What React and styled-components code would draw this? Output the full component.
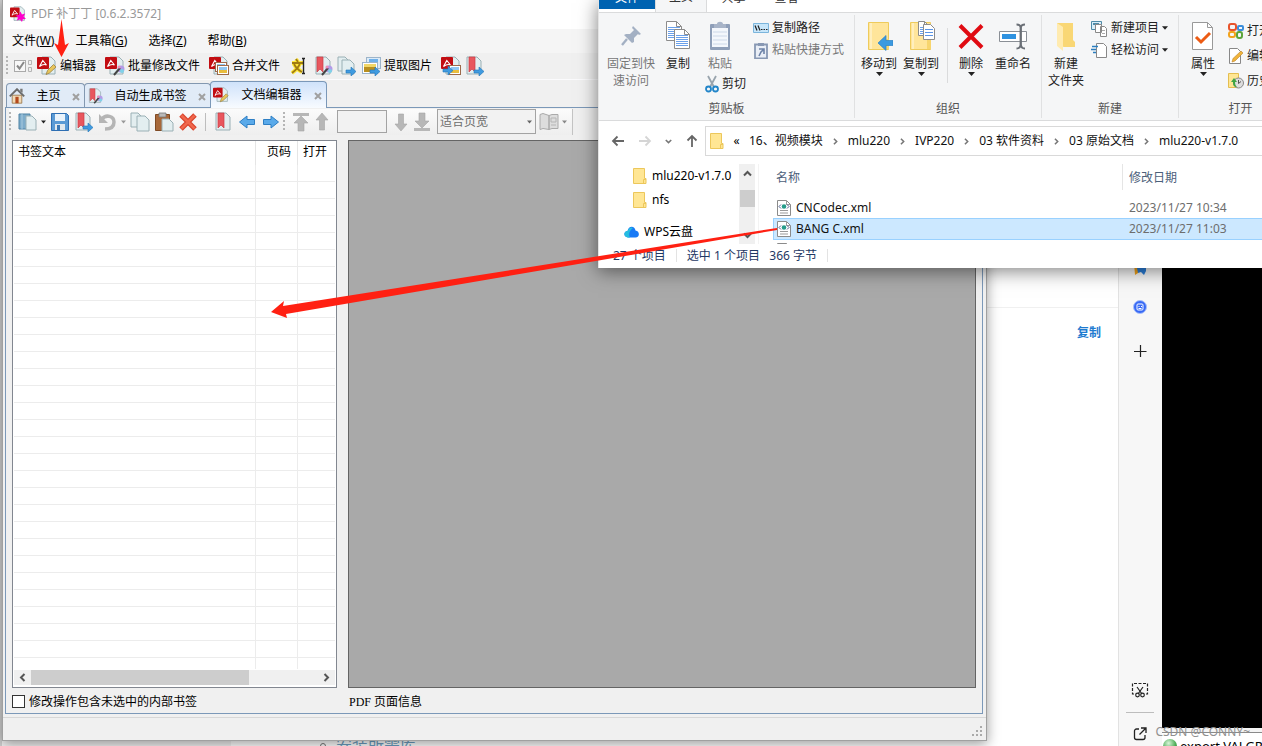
import React from "react";
import styled, { createGlobalStyle, css } from "styled-components";

const Global = createGlobalStyle`
  * { box-sizing: border-box; }
  body { margin: 0; overflow: hidden; font: 12px/16px "Noto Sans", "Noto Sans CJK SC", sans-serif; color: #000; }
  button, input, select { font: inherit; color: inherit; }
  svg { display: block; flex: none; }
`;

/* ---------- desktop behind the windows ---------- */
const Desktop = styled.div`
  position: relative; height: 100vh; min-height: 560px; overflow: hidden; display: flex; background: #fff;
`;
const DocNav = styled.div`width: 231px; background: #f2f2f2; border-left: 2px solid #cfcfcf;`;
const DocPage = styled.main`flex: 1; display: flex; flex-direction: column; min-width: 0; overflow: hidden;`;
const DocTop = styled.div`height: 308px; flex: none; border-bottom: 1px solid #f0f0f0;`;
const DocTools = styled.div`display: flex; justify-content: flex-end; padding: 17px;`;
const CopyLink = styled.a`color: #1e7bd0; text-decoration: none; font-weight: 700;`;
const DocFoot = styled.div`margin-top: auto; height: 10px; padding-left: 89px; display: flex; gap: 10px; align-items: flex-start;`;
const DocLink = styled.a`color: #6d9fc2; font-size: 16px; line-height: 18px; text-decoration: none;`;
const Bullet = styled.span`width: 6px; height: 6px; margin-top: 7px; border: 1px solid #777; border-radius: 50%;`;
const Rail = styled.aside`
  width: 44px; flex: none; display: flex; flex-direction: column; align-items: center;
  background: #f7f7f7; border-left: 1px solid #e2e2e2; padding: 260px 2px 4px 0;
`;
const RailButton = styled.button`
  border: 0; background: none; padding: 0; width: 24px; height: ${(p) => p.$h || 24}px;
  display: flex; align-items: center; justify-content: center; margin-top: ${(p) => p.$gap || 0}px;
`;
const RailSpacer = styled.div`flex: 1;`;
const RailLine = styled.div`width: 28px; height: 1px; background: #bdbdbd; margin: 10px 0 13px;`;
const Terminal = styled.div`width: 100px; flex: none; background: #000; display: flex; flex-direction: column; justify-content: flex-end;`;
const TermBar = styled.div`
  height: 18px; overflow: hidden; background: #f4f4f4; padding-top: 4px;
`;
const TermRow = styled.div`
  display: flex; gap: 3px; align-items: center; background: #fff; border-top: 1px solid #8a8a8a;
  padding: 2px 0 0 1px; height: 24px; white-space: nowrap; font-size: 13px;
`;
const Ball = styled.span`width: 14px; height: 14px; flex: none; border-radius: 50%; background: radial-gradient(circle at 40% 30%, #d9f5d9, #3fa54a 60%, #1f7a2b);`;
const Watermark = styled.div`position: absolute; right: 12px; bottom: 6px; color: #8f8f8f; white-space: nowrap; z-index: 6;`;

/* ---------- PDF patcher window ---------- */
const PdfWindow = styled.section`
  position: absolute; left: 2px; right: 275px; top: 0; bottom: 5px; z-index: 1;
  display: flex; flex-direction: column; background: #f0f0f0;
  border: 1px solid #a0a0a0; border-top: 0; box-shadow: 0 3px 12px rgba(0,0,0,.4);
`;
const TitleBar = styled.header`height: 29px; display: flex; align-items: center; gap: 5px; padding: 0 7px 1px; background: #fff; color: #999; flex: none;`;
const MenuBar = styled.nav`height: 24px; flex: none; display: flex; background: #f5f5f5; padding: 0 1px; gap: 5px;`;
const MenuItem = styled.button`border: 0; background: none; padding: 0 8px; white-space: nowrap;`;
const Strip = styled.div`
  display: flex; align-items: center; flex: none; height: ${(p) => p.$h}px; padding-left: ${(p) => p.$pad}px;
`;
const Grip = styled.span`
  width: 2px; height: 20px; flex: none; margin-right: ${(p) => p.$mr || 0}px;
  background: repeating-linear-gradient(#b5b5b5 0 2px, transparent 2px 4px);
`;
const ToolButton = styled.button`
  border: 0; background: none; display: flex; align-items: center; gap: 3px; height: 24px; flex: none;
  padding: 0 ${(p) => (p.$text ? 7 : 2)}px 0 2px; white-space: nowrap;
`;
const Tabs = styled.div`height: 28px; flex: none; display: flex; align-items: flex-end; padding-left: 3px; border-top: 1px solid #fbfbfd;`;
const Tab = styled.div`
  display: flex; align-items: center; justify-content: space-between; padding: 0 4px 0 2px; border: 1px solid #8398b0; border-bottom: 0;
  border-radius: 4px 4px 0 0; height: 24px; width: ${(p) => p.$w}px; background: #e1ebf7;
  margin-right: ${(p) => (p.$on ? 0 : -1)}px;
  ${(p) => p.$on && css`height: 27px; margin-bottom: -1px; z-index: 1; border-color: #7b98b8; background: linear-gradient(#cfe2fa, #f8fbff);`}
`;
const TabLabel = styled.button`border: 0; background: none; padding: 0; white-space: nowrap;`;
const TabClose = styled.button`border: 0; background: none; padding: 0; height: 10px; align-self: center; margin-top: 2px;`;
const TabPage = styled.div`
  flex: 1; min-height: 0; display: flex; flex-direction: column; margin: 0 3px 0 2px; border: 1px solid #7b98b8;
`;
const Sep = styled.span`width: 1px; height: 18px; background: #bdbdbd; flex: none; margin: 0 5px;`;
const ToolGroup = styled.div`display: flex; align-items: center; height: 26px; background: linear-gradient(#fbfbfb, #eee); border-right: 1px solid #c4c4c4; padding-right: 3px;`;
const PageInput = styled.input`width: 50px; height: 23px; margin: 0 5px 0 6px; border: 1px solid #a3a3a3; background: #f2f2f2;`;
const SelectWrap = styled.label`position: relative; display: flex; margin: 0 1px 0 3px;
  svg { position: absolute; right: 4px; top: 11px; pointer-events: none; }`;
const ZoomSelect = styled.select`appearance: none; width: 99px; height: 25px; border: 1px solid #a3a3a3; border-radius: 0; background: #f2f2f2; color: #6d6d6d; padding: 0 2px;`;
const Panels = styled.div`flex: 1; min-height: 0; display: flex; gap: 11px; padding: 5px 6px 0;`;
const Tree = styled.div`width: 325px; flex: none; display: flex; flex-direction: column; background: #fff; border: 1px solid #828790; padding: 0 1px 2px;`;
const TreeBody = styled.div`flex: 1; min-height: 0; overflow: hidden; margin-bottom: 1px;`;
const TreeTable = styled.table`
  width: 100%; table-layout: fixed; border-spacing: 0;
  th { height: 24px; padding: 0 6px 2px 4px; text-align: left; font-weight: 400; border-right: 1px solid #e5e5e5; }
  th + th { text-align: right; }
  td { height: 17px; padding: 0; border-right: 1px solid #ececec; border-bottom: 1px solid #ececec; }
  th:last-child, td:last-child { border-right: 0; }
  th:last-child { text-align: left; padding-left: 5px; }
`;
const HScroll = styled.div`height: 15px; flex: none; display: flex; align-items: center; background: #f0f0f0; padding: 0 4px;`;
const HTrack = styled.div`flex: 1; height: 15px; margin: 0 4px;`;
const HThumb = styled.div`width: 76%; height: 15px; background: #cdcdcd;`;
const Preview = styled.div`flex: 1; background: #a9a9a9; border: 1px solid #646464;`;
const InfoRow = styled.div`height: 25px; flex: none; display: flex; gap: 12px; align-items: center; padding: 2px 6px 0;`;
const CheckLabel = styled.label`width: 325px; display: flex; align-items: center; gap: 4px;`;
const Check = styled.input`appearance: none; width: 13px; height: 13px; margin: 0; background: #fff; border: 1px solid #333;`;
const Mono = styled.span`font: 12px/16px "Liberation Serif", serif;`;
const StatusBar = styled.footer`height: 23px; flex: none; margin-top: 3px; border-top: 1px solid #d7d7d7; display: flex; justify-content: flex-end; align-items: flex-end; padding: 3px;`;

/* ---------- file explorer window ---------- */
const Explorer = styled.section`
  position: absolute; left: 598px; right: 0; top: 0; z-index: 3;
  background: #fff; border-left: 1px solid #e4e4e4; box-shadow: 0 3px 18px rgba(0,0,0,.5);
`;
const RibbonTabs = styled.div`height: 12px; overflow: hidden; display: flex; align-items: flex-end;`;
const RibbonTab = styled.button`
  border: 0; background: none; height: 23px; flex: none; padding: 0 0 4px; width: 53px; color: #333; margin-bottom: 1px;
  ${(p) => p.$file && css`width: 56px; height: 22px; background: #0063b1; color: #fff; margin-bottom: 3px; padding: 0;`}
  ${(p) => p.$on && css`width: 52px; height: 25px; background: #f5f6f7; border: 1px solid #dadbdc; border-width: 0 1px; padding-bottom: 5px; margin-bottom: 0;`}
`;
const Ribbon = styled.div`display: flex; overflow: hidden; background: #f5f6f7; border: 1px solid #dadbdc; border-width: 1px 0; padding: 2px 0; height: 109px;`;
const Group = styled.div`width: ${(p) => p.$w}px; flex: none; display: flex; flex-direction: column; justify-content: space-between; border-right: 1px solid #e0e1e2;`;
const GroupBody = styled.div`display: flex; padding: 3px 0 0 ${(p) => p.$pad || 0}px;`;
const GroupName = styled.div`text-align: center; color: #555; padding-bottom: 1px;`;
const BigButton = styled.button`
  border: 0; background: none; padding: 3px 0 0; width: ${(p) => p.$w}px; flex: none; display: flex; flex-direction: column; align-items: center;
  color: ${(p) => (p.$off ? "#777" : "#222")}; line-height: 17px;
  > svg:first-child { margin-bottom: 4px; }
`;
const Stack = styled.div`display: flex; flex-direction: column; align-items: flex-start; gap: ${(p) => p.$gap || 0}px; padding: ${(p) => p.$pt || 0}px 0 0 ${(p) => p.$pl || 0}px;`;
const SmallButton = styled.button`
  border: 0; background: none; padding: 0; height: 20px; display: flex; align-items: center; gap: ${(p) => p.$gap || 3}px; white-space: nowrap;
  color: ${(p) => (p.$off ? "#777" : "#222")};
`;
const GroupLine = styled.span`width: 1px; height: 55px; background: #dadbdc; margin: 10px 4px 0 5px;`;
const NavRow = styled.div`display: flex; align-items: center; padding-top: 5px;`;
const NavButtons = styled.div`width: 106px; flex: none; display: flex; align-items: center; justify-content: space-between; padding: 0 6px 0 12px;`;
const NavButton = styled.button`border: 0; background: none; padding: 0;`;
const Address = styled.div`flex: 1; min-width: 0; height: 30px; display: flex; align-items: center; border: 1px solid #d9d9d9; border-right: 0; padding-left: 4px; overflow: hidden;`;
const Crumb = styled.button`border: 0; background: none; padding: 0; white-space: nowrap; color: #111;`;
const CrumbGap = styled.span`width: 25px; flex: none; display: flex; justify-content: center;`;
const Body = styled.div`display: flex; padding-top: 8px; height: 88px;`;
const Side = styled.div`width: 140px; flex: none;`;
const SideItem = styled.div`height: 24px; display: flex; align-items: center; gap: 5px; padding-left: ${(p) => p.$pl}px; margin-top: ${(p) => p.$mt || 0}px;`;
const VScroll = styled.div`width: 16px; flex: none; background: #f0f0f0; display: flex; flex-direction: column; align-items: center; padding: 5px 0 4px;`;
const VThumb = styled.div`width: 15px; height: 17px; background: #cdcdcd; margin: 12px 0 auto;`;
const ListPane = styled.div`flex: 1; min-width: 0; margin-left: 3px; padding-left: 14px; border-left: 1px solid #f3f3f3; overflow: hidden;`;
const FileTable = styled.table`
  width: 100%; table-layout: fixed; border-spacing: 0;
  th { height: 26px; padding: 2px 0 0 6px; text-align: left; font-weight: 400; color: #4c607a; }
  th:first-child { border-right: 1px solid #e5e5e5; padding-left: 3px; }
  td { padding: 0 0 0 6px; height: 21px; color: #6d6d6d; white-space: nowrap; border: 0 solid #99d1ff; }
`;
const Spacer = styled.tr`td { height: 7px; }`;
const FileRow = styled.tr`
  ${(p) => p.$on && css`td { height: 22px; background: #cce8ff; border-width: 1px 0; } td:first-child { border-left-width: 1px; padding-left: 5px; }`}
`;
const FileName = styled.span`display: flex; align-items: center; gap: 5px; color: #111; margin-left: -2px;`;
const ExplorerStatus = styled.footer`height: 24px; display: flex; align-items: center; padding: 0 0 1px 14px; color: #1f3864; white-space: nowrap;`;
const StatusSep = styled.span`width: 1px; height: 13px; background: #e3e3e3; margin: 0 10px;`;
const Arrows = styled.svg`position: absolute; left: 0; top: 0; z-index: 5; pointer-events: none;`;

/* ---------- icons ---------- */
const Svg = ({ s = 20, h, v = 20, children }) => (
  <svg width={s} height={h || s} viewBox={`0 0 ${v} ${h ? Math.round((v * h) / s) : v}`} fill="none" aria-hidden="true">{children}</svg>
);
const Sheet = ({ x = 5, y = 1, w = 13, h = 17 }) => (
  <path d={`M${x} ${y}h${w - 4}l4 4v${h - 4}h-${w}z`} fill="#e3eef0" stroke="#9ab0b5" />
);
const Acro = ({ x = 0, y = 1 }) => (
  <g transform={`translate(${x} ${y})`}>
    <rect width="12" height="12" rx="1" fill="#c20d12" />
    <path d="M2.500 9.500l3.300-6 3.700 4.500c-2-.9-4.500-.5-7 1.500z" stroke="#fff" strokeWidth="1.100" />
  </g>
);
const Ribbonmark = ({ x = 3 }) => (
  <path d={`M${x} 1h6v15l-3-3-3 3z`} fill="#e8575e" stroke="#cc3d46" strokeWidth=".7" />
);
const Pencil = () => <path d="M9 18.500l1.500-4 6-6 2.500 2.500-6.500 6z" fill="#e8c55a" stroke="#9b8141" strokeWidth=".8" />;
const Wand = () => (
  <g><circle cx="16" cy="13" r="3.500" fill="#b39be8" /><circle cx="17" cy="15" r="2" fill="#7fd3e8" /><path d="M9 19l6-7" stroke="#444" strokeWidth="2" /><circle cx="14" cy="11" r="1.500" fill="#ee8fb5" /></g>
);
const BlueArrow = ({ x = 9, y = 11, c = "#3f9be0" }) => (
  <path transform={`translate(${x} ${y})`} d="M0 3h5V0l5 4.500L5 9V6H0z" fill={c} stroke="#2475b8" strokeWidth=".6" />
);
const Picture = ({ x = 8, y = 8, c = "#9c6a4b" }) => (
  <g transform={`translate(${x} ${y})`}><rect x=".5" y=".5" width="11" height="9" fill="#fff" stroke={c} /><path d="M2 2h8v3H2z" fill="#8fc6f2" /><path d="M2 5h8v3H2z" fill="#e9bd3d" /></g>
);
const PdfEdit = ({ s }) => <Svg s={s}><Sheet /><Acro /><Pencil /></Svg>;
const PdfWand = () => <Svg><Sheet /><Acro /><Wand /></Svg>;
const PdfMerge = () => <Svg><Sheet /><Acro /><Picture x={6} y={6} /><Picture x={8} y={9} /></Svg>;
const MarkWand = ({ s }) => <Svg s={s}><Sheet x={3} w={14} /><Ribbonmark x={4} /><Wand /></Svg>;
const MarkOut = () => <Svg><Sheet x={2} w={14} /><Ribbonmark x={4} /><BlueArrow /></Svg>;
const Mark = () => <Svg><Sheet x={3} w={14} /><Ribbonmark x={5} /></Svg>;
const PagesOut = () => <Svg><Sheet x={1} w={11} h={14} /><Sheet x={5} y={4} w={12} h={14} /><BlueArrow /></Svg>;
const PicOut = () => <Svg><rect x="5.500" y="1.500" width="14" height="11" fill="#dcebf8" stroke="#9db4c9" /><path d="M8 3h9v3H8z" fill="#6fb1ea" /><rect x="1.500" y="6.500" width="15" height="11" fill="#fff" stroke="#9db4c9" /><path d="M3 8h12v3H3z" fill="#f1d667" /><path d="M3 11h12v5H3z" fill="#b98f1e" /><BlueArrow /></Svg>;
const PdfPic = () => <Svg><Sheet /><Acro /><Picture x={8} y={9} /><BlueArrow x={2} y={10} /></Svg>;
const AppIcon = () => <Svg s={16}><Sheet /><Acro y={2} /><path d="M13 7l2 3.500 4-1-2 3.800 3 2.700-4 .5-1 3.500-2.500-3-4 1 1.500-3.700L7 12l4-.8z" fill="#f0c" /></Svg>;
const Checks = () => <Svg><rect x="1.500" y="4.500" width="11" height="11" fill="#f7f7f7" stroke="#aaa" /><path d="M4 9.500l2.500 3L11 6" stroke="#888" strokeWidth="2" /><path d="M15.500 4.500h3v4h-3zM15.500 11.500h3v4h-3z" stroke="#b5b5b5" /></Svg>;
const TextIcon = () => <Svg><path d="M7 3l2 3M3 7h11M11 7c-1 4-4 7-8 10M5 8c2 4 4 6 8 8" stroke="#ffe93c" strokeWidth="4" /><path d="M7 3l2 3M3 7h11M11 7c-1 4-4 7-8 10M5 8c2 4 4 6 8 8" stroke="#a07b12" strokeWidth="1.800" /><path d="M13 2.500h3M14.500 3v14M13 17.500h3" stroke="#222" strokeWidth="1.400" /></Svg>;
const Home = () => <Svg s={16}><path d="M4 9h12v10H4z" fill="#f1d9b5" stroke="#95703f" /><path d="M1 10.500l9-9 9 9" stroke="#6c6c6c" strokeWidth="2.400" /><path d="M8 11h4v8H8z" fill="#b4491c" /><path d="M14 1h3v5l-3-2z" fill="#777" /></Svg>;
const BookIcon = () => <Svg><path d="M1 2h11v15H1z" fill="#7daccb" stroke="#4f82a4" /><path d="M4 1.500v16" stroke="#a9cade" /><Sheet x={8} y={4} w={10} h={14} /></Svg>;
const ReadIcon = () => <Svg><path d="M1 2.500l3-1 6 2v14l-6-1-3 1zM10 3.500l3-1h6v14h-6l-3 1z" fill="#ddd" stroke="#aaa" /><path d="M12 6h5v4h-5zM12 13h5" stroke="#b5b5b5" /></Svg>;
const Save = () => <Svg><path d="M1.500 1.500h15l2 2v15h-17z" fill="#5a9ad5" stroke="#2f6fb3" /><path d="M5 2h10v7H5z" fill="#eaf3fb" /><path d="M5 12h10v6H5z" fill="#e1e8ee" /><path d="M7 13h3v5H7z" fill="#3c78b5" /></Svg>;
const Undo = () => <Svg><path d="M4 7c4-5 12-3 12 3 0 5-4 7-9 7" stroke="#b5b5b5" strokeWidth="3.500" /><path d="M1 2v9h9z" fill="#b5b5b5" /></Svg>;
const CopyIcon = () => <Svg><Sheet x={1} w={11} h={14} /><Sheet x={7} y={4} w={12} h={15} /></Svg>;
const PasteIcon = () => <Svg><path d="M1.500 2.500h14v16h-14z" fill="#a8683a" stroke="#7f4a24" /><path d="M5 1h7v4H5z" fill="#b9b9b9" stroke="#777" strokeWidth=".8" /><Sheet x={8} y={7} w={11} h={12} /></Svg>;
const Cross = () => <Svg><path d="M3 3l14 14M17 3L3 17" stroke="#d9432c" strokeWidth="5" /><path d="M3.500 3.500l13 13M16.500 3.500l-13 13" stroke="#f0674c" strokeWidth="2.500" /></Svg>;
const WideArrow = ({ flip }) => <Svg><path transform={flip ? "" : "translate(20 0) scale(-1 1)"} d="M17.500 7.500h-7.500V4L2.500 10l7.500 6v-3.500h7.500z" fill="#5aaaea" stroke="#2e7fc4" /></Svg>;
const GrayArrow = ({ down, bar, s = 20 }) => (
  <Svg s={s} h={20} v={s}><g transform={down ? "translate(0 20) scale(1 -1)" : ""}>{bar && <path d={`M2 1h${s - 4}v3H2z`} fill="#b7b7b7" />}
    <path d={s > 16 ? "M10 4l7 7h-4v8H7v-8H3z" : "M7 1l6 7H9.500v10h-5V8H1z"} fill="#b7b7b7" stroke="#a5a5a5" strokeWidth=".6" /></g></Svg>
);
const Caret = ({ c = "#222", s = 7 }) => <svg width={s} height="4" viewBox="0 0 7 4" aria-hidden="true"><path d="M0 0h7L3.500 4z" fill={c} /></svg>;
const CloseX = () => <svg width="8" height="8" viewBox="0 0 8 8" aria-hidden="true"><path d="M1 1l6 6M7 1L1 7" stroke="#a0a0a0" strokeWidth="2" /></svg>;
const Chevron = ({ d, w = 1.5, c = "#555", s = 9 }) => {
  const r = { right: 0, down: 90, left: 180, up: 270 }[d];
  return <svg width={s} height={s} viewBox="0 0 9 9" aria-hidden="true"><path transform={`rotate(${r} 4.500 4.500)`} d="M2.500 1l3.500 3.500L2.500 8" fill="none" stroke={c} strokeWidth={w} /></svg>;
};
const LongArrow = ({ up, right, c = "#666" }) => (
  <svg width="14" height="14" viewBox="0 0 14 14" fill="none" aria-hidden="true"><path transform={`rotate(${up ? 90 : right ? 180 : 0} 7 7)`} d="M13 7H2M6.500 2.500L2 7l4.500 4.500" stroke={c} strokeWidth="1.800" /></svg>
);
const Folder = () => <svg width="14" height="16" viewBox="0 0 14 16" aria-hidden="true"><path d="M.5.500h11v10h1.500v5H.5z" fill="#ffe694" stroke="#ecc75b" /><path d="M10.500 15.500v-4h2.500" stroke="#ecc75b" fill="none" /></svg>;
const XmlIcon = () => <svg width="14" height="16" viewBox="0 0 14 16" fill="none" aria-hidden="true"><path d="M.5.500h9l4 4v11H.5z" fill="#fff" stroke="#8b8b8b" /><path d="M9.500.500v4h4M3 10.500h8M3 13h8" stroke="#999" /><circle cx="7" cy="6.500" r="2.300" fill="#259b8a" /><path d="M4 4.500l-2 2 2 2M10 4.500l2 2-2 2" stroke="#4a5b8c" /></svg>;
const Cloud = () => <svg width="15" height="12" viewBox="0 0 15 12" aria-hidden="true"><path d="M4 11.500C-1 11-.5 5 3.500 5 4.500-1 11-.5 11.500 4.500c4.500.5 4.500 7 0 7z" fill="#1879f5" /><path d="M4 11.500C-1 11-.5 5 3.500 5 5 1 8 1 9 2c-3 2-5 6-3 9.500z" fill="#25bde0" /></svg>;
const DocLines = ({ x, y, w = 17, h = 21 }) => (
  <g><path d={`M${x}.5 ${y}.5h${w - 5}l5 5v${h - 5}h-${w}z`} fill="#fff" stroke="#8c8c8c" /><path d={`M${x + w - 5}.5 ${y}.5v5h5`} stroke="#8c8c8c" />
    {[6, 8, 10, 12, 14, 16, 18].filter((k) => k < h - 1).map((k) => <path key={k} d={`M${x + 2} ${y + k}.5h${w - 3}`} stroke="#6aa0ea" />)}</g>
);
const Pin = () => <Svg s={30} v={30}><path d="M17 5l8 8-2 1-1-1-4 4v4l-2 1-8-8 2-1h4l4-4-2-2z" fill="#a3b0c3" /><path d="M11 18l-5 6" stroke="#a3b0c3" strokeWidth="2.400" /></Svg>;
const BigCopy = () => <Svg s={26} h={30} v={26}><DocLines x={1} y={0} w={15} h={19} /><DocLines x={9} y={8} w={15} h={19} /></Svg>;
const BigPaste = () => <Svg s={24} h={30} v={24}><rect x="2" y="3" width="20" height="26" rx="1" fill="#8f9fb9" /><path d="M4 7h16v19H4z" fill="#f4f7fc" /><path d="M6 3h3c0-3 6-3 6 0h3v4H6z" fill="#a8b4c8" />{[11, 15, 19, 23].map((y) => <path key={y} d={`M5 ${y}h14`} stroke="#cdd8e8" />)}</Svg>;
const Scissors = () => <svg width="14" height="18" viewBox="0 0 14 18" fill="none" aria-hidden="true"><path d="M3 1l6 11M11 1L5 12" stroke="#99a4ad" strokeWidth="1.800" /><circle cx="3.500" cy="14" r="2.500" stroke="#2285c9" strokeWidth="1.800" /><circle cx="10.500" cy="14" r="2.500" stroke="#2285c9" strokeWidth="1.800" /></svg>;
const PathIcon = () => <svg width="16" height="10" viewBox="0 0 16 10" aria-hidden="true"><path d="M.5.500h15v9H.5z" fill="#c7e6fa" stroke="#7bb5dc" /><path d="M2 2.500l2 5M5 2.500l2 5" stroke="#222" strokeWidth="1.200" /><path d="M8 6.500h1.500M10.500 6.500H12M13 6.500h1.500" stroke="#222" /></svg>;
const ShortcutIcon = () => <svg width="16" height="17" viewBox="0 0 16 17" fill="none" aria-hidden="true"><path d="M2 2.500h12v14H2z" fill="#e9eef6" stroke="#8898b3" strokeWidth="1.800" /><path d="M5 1h6v3H5z" fill="#8898b3" /><path d="M6 7h5v5M11 7l-3 3-2 4" stroke="#6d83a8" strokeWidth="1.600" /></svg>;
const BigFolder = ({ children }) => <Svg s={28} h={30} v={28}><path d="M3.500 1.500h20v27h-20z" fill="#ffe59a" stroke="#eecb5c" /><path d="M6 2v26" stroke="#ffefbe" strokeWidth="2" /><path d="M20 18h4v10h-4z" fill="#f7d56e" />{children}</Svg>;
const MoveTo = () => <BigFolder><path d="M28 19.500h-7v-5l-8 7.500 8 7.500v-5h7z" fill="#3c9ae0" stroke="#2b82c6" strokeWidth=".7" /></BigFolder>;
const CopyTo = () => <BigFolder><DocLines x={11} y={0} w={11} h={14} /><path d="M16.500 3.500h7l4 4v11h-11z" fill="#fff" stroke="#8c8c8c" /><path d="M18 8.500h8M18 11.500h8M18 14.500h8" stroke="#5a94e6" /></BigFolder>;
const DeleteIcon = () => <Svg s={28} h={30} v={28}><path d="M3 4.500l22 22M25 4.500l-22 22" stroke="#e00b12" strokeWidth="4" /></Svg>;
const Rename = () => <Svg s={30} h={30} v={30}><path d="M1.500 10.500h27v10h-27z" fill="#fff" stroke="#8a8f96" /><path d="M4 13h14v5H4z" fill="#2f92e0" /><path d="M18.500 3.500c3 0 4 1 4 3v17c0 2-1 4-4 4M27 3.500c-3 0-4 1-4 3v17c0 2 1 4 4 4" stroke="#6a6f76" strokeWidth="1.800" /></Svg>;
const NewFolder = () => <Svg s={22} h={30} v={22}><path d="M2 2h16v17l2 2v5H9l-7-2z" fill="#f9d775" /><path d="M2 2l6 4v24l-6-5z" fill="#ffebb0" /></Svg>;
const NewItem = () => <svg width="17" height="17" viewBox="0 0 17 17" fill="none" aria-hidden="true"><path d="M.5 1.500h10v8H.5z" fill="#d8eefa" stroke="#4e8ba8" /><path d="M2 4h6" stroke="#4e8ba8" strokeWidth="2" /><path d="M4.500 4.500h6v8h-6zM9.500 6.500h4l2 2v8h-6z" fill="#fff" stroke="#888" /><path d="M11 10.500h3M11 13.500h3" stroke="#aaa" /></svg>;
const EasyAccess = () => <svg width="17" height="17" viewBox="0 0 17 17" fill="none" aria-hidden="true"><path d="M5.500 1.500h7l3 3v11h-10z" fill="#fff" stroke="#888" /><path d="M0 7.500h5M1 4.500h6M2 10.500h3" stroke="#2c7fc0" strokeWidth="1.300" /></svg>;
const Props = () => <Svg s={24} h={30} v={24}><path d="M1.500 1.500h15l5 5v22h-20z" fill="#fff" stroke="#999" /><path d="M16.500 1.500v5h5" stroke="#999" /><path d="M5 16l5 5 9-9" stroke="#ec5b14" strokeWidth="3" /></Svg>;
const Office = () => <svg width="16" height="16" viewBox="0 0 16 16" fill="none" strokeWidth="2" aria-hidden="true"><rect x="1" y="1" width="7" height="6" rx="2" stroke="#e8532b" /><rect x="10" y="3" width="5" height="4" rx="1" stroke="#3b8edb" /><rect x="1" y="9" width="6" height="5" rx="2" stroke="#f2a31c" /><rect x="9" y="9" width="5" height="6" rx="2" stroke="#5ca53c" /></svg>;
const EditIcon = () => <svg width="16" height="16" viewBox="0 0 16 16" fill="none" aria-hidden="true"><path d="M1.500.500h8l3 3v12h-11z" fill="#fff" stroke="#888" /><path d="M4 14l1-3.500L13 3l2 2-8 8z" fill="#f0b43a" stroke="#bb822a" strokeWidth=".6" /></svg>;
const History = () => <svg width="16" height="16" viewBox="0 0 16 16" fill="none" aria-hidden="true"><path d="M.5.500h10v14H.5z" fill="#ffe694" stroke="#e4be50" /><circle cx="10.500" cy="10" r="5" fill="#ddd" stroke="#888" /><path d="M10.500 7v3.500l2.500-2" stroke="#555" /><path d="M3 9l3-4 3 4H7c0 3 1 4 2 5-3 0-4-2-4-5z" fill="#3fa544" /></svg>;

const toolMain = [
  [PdfEdit, "编辑器"], [PdfWand, "批量修改文件"], [PdfMerge, "合并文件"], [TextIcon], [MarkWand], [PagesOut], [PicOut, "提取图片"], [PdfPic], [MarkOut],
];
const crumbs = ["16、视频模块", "mlu220", "IVP220", "03 软件资料", "03 原始文档", "mlu220-v1.7.0"];
const files = [["CNCodec.xml", "2023/11/27 10:34"], ["BANG C.xml", "2023/11/27 11:03"], ["", ""]];

function PdfPatcher() {
  return (
    <PdfWindow>
      <TitleBar><AppIcon />PDF 补丁丁 [0.6.2.3572]</TitleBar>
      <MenuBar>
        {[["文件", "W"], ["工具箱", "G"], ["选择", "Z"], ["帮助", "B"]].map(([t, k]) => <MenuItem key={k}>{t}(<u>{k}</u>)</MenuItem>)}
      </MenuBar>
      <Strip $h={26} $pad={3}>
        <Grip $mr={3} />
        <ToolButton aria-label="选项"><Checks /></ToolButton>
        {toolMain.map(([Icon, text], i) => <ToolButton key={i} $text={text} aria-label={text || "工具"}><Icon />{text}</ToolButton>)}
      </Strip>
      <Tabs>
        <Tab $w={79}><Home /><TabLabel>主页</TabLabel><TabClose aria-label="关闭"><CloseX /></TabClose></Tab>
        <Tab $w={127}><MarkWand s={16} /><TabLabel>自动生成书签</TabLabel><TabClose aria-label="关闭"><CloseX /></TabClose></Tab>
        <Tab $w={117} $on><PdfEdit s={16} /><TabLabel>文档编辑器</TabLabel><TabClose aria-label="关闭"><CloseX /></TabClose></Tab>
      </Tabs>
      <TabPage>
        <Strip $h={27} $pad={3}>
          <ToolGroup>
            <Grip $mr={5} />
            <ToolButton aria-label="打开"><BookIcon /><Caret s={5} /></ToolButton>
            <ToolButton aria-label="保存"><Save /></ToolButton>
            <ToolButton aria-label="导出书签"><MarkOut /></ToolButton>
            <ToolButton aria-label="撤销"><Undo /><Caret s={5} c="#999" /></ToolButton>
            <ToolButton aria-label="复制"><CopyIcon /></ToolButton>
            <ToolButton aria-label="粘贴"><PasteIcon /></ToolButton>
            <ToolButton aria-label="删除"><Cross /></ToolButton>
            <Sep />
            <ToolButton aria-label="书签"><Mark /></ToolButton>
            <ToolButton aria-label="左移"><WideArrow flip /></ToolButton>
            <ToolButton aria-label="右移"><WideArrow /></ToolButton>
            <Grip $mr={4} />
            <ToolButton aria-label="首页"><GrayArrow bar /></ToolButton>
            <ToolButton aria-label="上一页"><GrayArrow s={14} /></ToolButton>
            <PageInput aria-label="页码" disabled />
            <ToolButton aria-label="下一页"><GrayArrow s={14} down /></ToolButton>
            <ToolButton aria-label="末页"><GrayArrow bar down /></ToolButton>
            <SelectWrap><ZoomSelect aria-label="缩放" defaultValue="w"><option value="w">适合页宽</option></ZoomSelect><Caret s={5} c="#666" /></SelectWrap>
            <ToolButton aria-label="阅读"><ReadIcon /><Caret s={5} c="#888" /></ToolButton>
          </ToolGroup>
        </Strip>
        <Panels>
          <Tree>
            <TreeBody>
              <TreeTable>
                <colgroup><col /><col style={{ width: 42 }} /><col style={{ width: 37 }} /></colgroup>
                <thead><tr><th>书签文本</th><th>页码</th><th>打开</th></tr></thead>
                <tbody>{Array.from({ length: 30 }, (_, i) => <tr key={i}><td /><td /><td /></tr>)}</tbody>
              </TreeTable>
            </TreeBody>
            <HScroll><Chevron d="left" w={2} /><HTrack><HThumb /></HTrack><Chevron d="right" w={2} /></HScroll>
          </Tree>
          <Preview />
        </Panels>
        <InfoRow>
          <CheckLabel><Check type="checkbox" />修改操作包含未选中的内部书签</CheckLabel>
          <span><Mono>PDF </Mono>页面信息</span>
        </InfoRow>
      </TabPage>
      <StatusBar>
        <svg width="11" height="11" viewBox="0 0 11 11" aria-hidden="true"><path d="M8 0h2v2H8zM4 4h2v2H4zM8 4h2v2H8zM0 8h2v2H0zM4 8h2v2H4zM8 8h2v2H8z" fill="#aaa" /></svg>
      </StatusBar>
    </PdfWindow>
  );
}

function FileExplorer() {
  return (
    <Explorer>
      <RibbonTabs>
        <RibbonTab $file>文件</RibbonTab><RibbonTab $on>主页</RibbonTab><RibbonTab>共享</RibbonTab><RibbonTab>查看</RibbonTab>
      </RibbonTabs>
      <Ribbon>
        <Group $w={256}>
          <GroupBody>
            <BigButton $w={64} $off><Pin />固定到快<br />速访问</BigButton>
            <BigButton $w={30}><BigCopy />复制</BigButton>
            <Stack $pl={12} $gap={2}>
              <BigButton $w={30} $off><BigPaste />粘贴</BigButton>
              <SmallButton><Scissors />剪切</SmallButton>
            </Stack>
            <Stack $pl={7} $gap={2}>
              <SmallButton><PathIcon />复制路径</SmallButton>
              <SmallButton $off><ShortcutIcon />粘贴快捷方式</SmallButton>
            </Stack>
          </GroupBody>
          <GroupName>剪贴板</GroupName>
        </Group>
        <Group $w={187}>
          <GroupBody $pad={3}>
            <BigButton $w={42}><MoveTo />移动到<Caret /></BigButton>
            <BigButton $w={42}><CopyTo />复制到<Caret /></BigButton>
            <GroupLine />
            <BigButton $w={38}><DeleteIcon />删除<Caret /></BigButton>
            <BigButton $w={46}><Rename />重命名</BigButton>
          </GroupBody>
          <GroupName>组织</GroupName>
        </Group>
        <Group $w={137}>
          <GroupBody $pad={3}>
            <BigButton $w={42}><NewFolder />新建<br />文件夹</BigButton>
            <Stack $pl={4} $gap={2}>
              <SmallButton><NewItem />新建项目<Caret s={6} /></SmallButton>
              <SmallButton><EasyAccess />轻松访问<Caret s={6} /></SmallButton>
            </Stack>
          </GroupBody>
          <GroupName>新建</GroupName>
        </Group>
        <Group $w={124}>
          <GroupBody $pad={3}>
            <BigButton $w={42}><Props />属性<Caret /></BigButton>
            <Stack $pl={4} $gap={5} $pt={3}>
              <SmallButton><Office />打开</SmallButton>
              <SmallButton><EditIcon />编辑</SmallButton>
              <SmallButton><History />历史记录</SmallButton>
            </Stack>
          </GroupBody>
          <GroupName>打开</GroupName>
        </Group>
      </Ribbon>
      <NavRow>
        <NavButtons>
          <NavButton aria-label="后退"><LongArrow /></NavButton>
          <NavButton aria-label="前进"><LongArrow right c="#d5d5d5" /></NavButton>
          <NavButton aria-label="最近"><Chevron d="down" c="#777" s={7} w={2} /></NavButton>
          <NavButton aria-label="上级"><LongArrow up /></NavButton>
        </NavButtons>
        <Address>
          <Folder /><CrumbGap>«</CrumbGap>
          {crumbs.map((c, i) => <React.Fragment key={c}>{i > 0 && <CrumbGap><Chevron d="right" c="#777" s={7} w={2} /></CrumbGap>}<Crumb>{c}</Crumb></React.Fragment>)}
        </Address>
      </NavRow>
      <Body>
        <Side>
          <SideItem $pl={34}><Folder />mlu220-v1.7.0</SideItem>
          <SideItem $pl={34}><Folder />nfs</SideItem>
          <SideItem $pl={25} $mt={8}><Cloud />WPS云盘</SideItem>
        </Side>
        <VScroll><Chevron d="up" w={2} /><VThumb /><Chevron d="down" w={2} /></VScroll>
        <ListPane>
          <FileTable>
            <colgroup><col style={{ width: 350 }} /><col /></colgroup>
            <thead><tr><th>名称</th><th>修改日期</th></tr></thead>
            <tbody>
              <Spacer><td colSpan="2" /></Spacer>
              {files.map(([n, d], i) => <FileRow key={i} $on={i === 1}><td><FileName><XmlIcon />{n}</FileName></td><td>{d}</td></FileRow>)}
            </tbody>
          </FileTable>
        </ListPane>
      </Body>
      <ExplorerStatus>27 个项目<StatusSep />选中 1 个项目&nbsp;&nbsp;&nbsp;366 字节<StatusSep /></ExplorerStatus>
    </Explorer>
  );
}

export default function App() {
  return (
    <>
      <Global />
      <Desktop>
        <DocNav />
        <DocPage>
          <DocTop />
          <DocTools><CopyLink href="#copy">复制</CopyLink></DocTools>
          <DocFoot><Bullet /><DocLink href="#install">安装所需库</DocLink></DocFoot>
        </DocPage>
        <Rail>
          <RailButton aria-label="消息" $h={16}><svg width="14" height="14" viewBox="0 0 14 14"><path d="M1 2h4v10l-3 2z" fill="#f2a31c" /><path d="M3 2h10v8l-2 4-3-3-3 1z" fill="#2b7fdb" /></svg></RailButton>
          <RailButton aria-label="助手" $gap={19}><svg width="16" height="16" viewBox="0 0 16 16" fill="none"><circle cx="8" cy="8" r="6.500" fill="#3769f5" stroke="#a9c0fb" /><rect x="5" y="5" width="6" height="6" rx="1" stroke="#fff" /><path d="M6.500 7.500h1M9 7.500h1M6.500 9.500h3" stroke="#fff" /></svg></RailButton>
          <RailButton aria-label="添加" $gap={20}><svg width="14" height="14" viewBox="0 0 14 14"><path d="M7.500 1v12M1 7.500h12.500" stroke="#222" strokeWidth="1.200" /></svg></RailButton>
          <RailSpacer />
          <RailButton aria-label="截图"><svg width="18" height="16" viewBox="0 0 18 16" fill="none" stroke="#222" strokeWidth="1.200"><path d="M3 12H1.500V1.500h15V12H15" strokeDasharray="3 1.500" /><path d="M6 5l5 7M12 5l-5 7" /><circle cx="6.500" cy="13" r="1.800" /><circle cx="11.500" cy="13" r="1.800" /></svg></RailButton>
          <RailLine />
          <RailButton aria-label="打开外部" $h={16}><svg width="14" height="14" viewBox="0 0 14 14" fill="none" stroke="#222" strokeWidth="1.300"><path d="M6 2H3.500A2 2 0 0 0 1.500 4v6.500a2 2 0 0 0 2 2H10a2 2 0 0 0 2-2V8M8 1h5v5M13 1L6.500 7.500" /></svg></RailButton>
        </Rail>
        <Terminal><TermBar><TermRow><Ball />export VALGR</TermRow></TermBar></Terminal>
        <PdfPatcher />
        <FileExplorer />
        <Arrows width="780" height="320" viewBox="0 0 780 320" aria-hidden="true">
          <path d="M271 312l13-11-1 5L777 228v2L286 314l1 4z" fill="#ff2012" />
          <path d="M61.500 19l3.500 26 4-2-7.500 14L54 43l4 2z" fill="#ff2012" />
        </Arrows>
        <Watermark>CSDN @CONNY~</Watermark>
      </Desktop>
    </>
  );
}
